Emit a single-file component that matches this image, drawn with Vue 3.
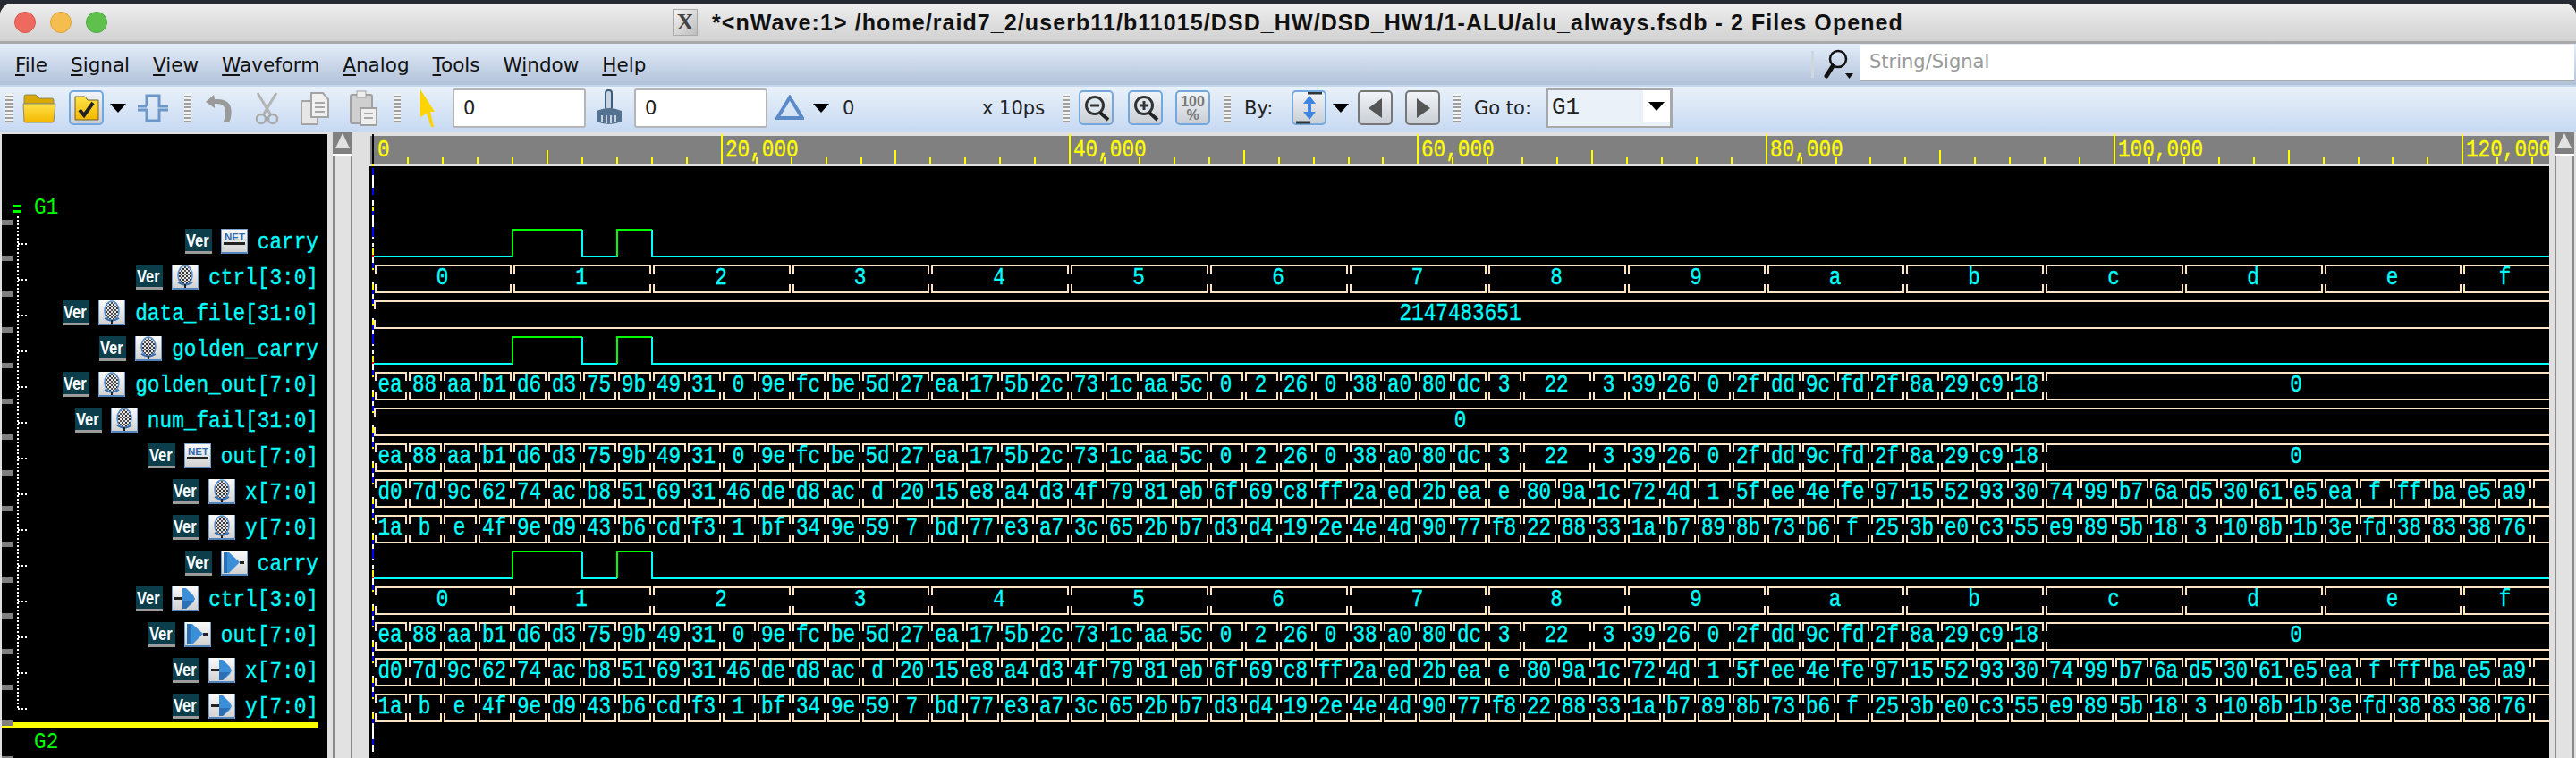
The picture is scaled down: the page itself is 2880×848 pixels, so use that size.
<template>
  <div class="screen">
    <div class="window">
      <header class="titlebar">
        <div class="lights">
          <span class="light red"></span>
          <span class="light amber"></span>
          <span class="light green"></span>
        </div>
        <span class="x-badge">X</span>
        <span class="title">*&lt;nWave:1&gt; /home/raid7_2/userb11/b11015/DSD_HW/DSD_HW1/1-ALU/alu_always.fsdb - 2 Files Opened</span>
      </header>

      <nav class="menubar">
        <span v-for="m in menus" :key="m.label" class="menu-item">{{ m.before }}<u>{{ m.key }}</u>{{ m.after }}</span>
        <span class="menu-sep"></span>
        <svg class="search-icon" width="34" height="36" viewBox="0 0 34 36">
          <circle cx="16" cy="12" r="9" fill="none" stroke="#111" stroke-width="2.5" />
          <path d="M10 20 L3 31" stroke="#111" stroke-width="5" stroke-linecap="round" />
          <path d="M24 28 h9 l-4.5 6 z" fill="#111" />
        </svg>
        <div class="search-box">String/Signal</div>
      </nav>

      <div class="toolbar">
        <span class="grip m6"></span>
        <svg class="tb m11" width="38" height="38" viewBox="0 0 38 38">
          <path d="M2 6 q0-2 2-2 h11 l4 4 h14 q2 0 2 2 v4 H2 z" fill="#d9a900" stroke="#8d8a6a" />
          <path d="M1 14 H37 L35 34 q0 1-2 1 H4 q-2 0-2-1 z" fill="url(#folderFill)" stroke="#8d8a6a" />
        </svg>
        <span class="tb-btn m14 active">
          <svg width="30" height="30" viewBox="0 0 30 30">
            <path d="M2 2 h11 l3 4 h12 v22 H2 z" fill="url(#folderFill)" stroke="#6d6130" />
            <path d="M7 17 l5 6 l10-14" fill="none" stroke="#222" stroke-width="4" />
          </svg>
        </span>
        <span class="drop m7"></span>
        <svg class="tb m12" width="36" height="34" viewBox="0 0 36 34">
          <path d="M11 15 H1 M11 15 V3 H25 V15 H35 M1 19 H11 V31 H25 V19 H35" fill="none" stroke="#6d97c9" stroke-width="3" />
        </svg>
        <span class="grip m17"></span>
        <svg class="tb m14" width="32" height="36" viewBox="0 0 32 36">
          <path d="M11 3 L2 11 L12 18 V13 Q24 12 24 22 Q24 28 22 33 L28 34 Q32 26 30 17 Q27 7 12 8 z" fill="#9a9a9a" />
        </svg>
        <svg class="tb m25" width="27" height="38" viewBox="0 0 27 38">
          <path d="M3 2 L18 27 M24 2 L9 27" stroke="#b4b4b4" stroke-width="3" fill="none" />
          <circle cx="7" cy="31" r="5" fill="none" stroke="#aaa" stroke-width="2.5" />
          <circle cx="20" cy="31" r="5" fill="none" stroke="#aaa" stroke-width="2.5" />
        </svg>
        <svg class="tb m24" width="32" height="38" viewBox="0 0 32 38">
          <rect x="1" y="11" width="18" height="26" fill="#e6e6e6" stroke="#a4a4a4" stroke-width="2" />
          <path d="M12 2 h13 l6 7 v20 H12 z" fill="#f0f0f0" stroke="#a4a4a4" stroke-width="2" />
          <path d="M16 13 h11 M16 18 h11 M16 23 h11" stroke="#a8a8a8" stroke-width="2" />
        </svg>
        <svg class="tb m22" width="32" height="40" viewBox="0 0 32 40">
          <rect x="2" y="5" width="24" height="32" rx="2" fill="#cfcfcf" stroke="#a0a0a0" stroke-width="2" />
          <rect x="9" y="1" width="10" height="7" fill="#eee" stroke="#a0a0a0" />
          <rect x="13" y="20" width="18" height="19" fill="#efefef" stroke="#a0a0a0" stroke-width="2" />
          <path d="M17 26 h10 M17 31 h10" stroke="#a8a8a8" stroke-width="2" />
        </svg>
        <span class="grip m18"></span>
        <svg class="tb m21" width="18" height="44" viewBox="0 0 18 44">
          <path d="M1 1 L17 26 L12 26 L16 43 L13 43 L8 28 L1 32 z" fill="#fdd300" />
        </svg>
        <div class="num-box m19">0</div>
        <svg class="tb m10" width="32" height="42" viewBox="0 0 32 42">
          <rect x="12" y="1" width="7" height="22" rx="3" fill="#c9d4e2" stroke="#3c5c7a" stroke-width="2" />
          <path d="M2 24 q14-6 28 0 v12 q-14 6-28 0 z" fill="#54728f" />
          <path d="M8 29 v8 M13 29 v9 M18 29 v9 M23 29 v8" stroke="#c5d2df" stroke-width="2" />
        </svg>
        <div class="num-box m12">0</div>
        <svg class="tb m9" width="32" height="30" viewBox="0 0 32 30">
          <path d="M16 3 L30 26 H2 z" fill="none" stroke="#5a8bc8" stroke-width="4" />
        </svg>
        <span class="drop m10"></span>
        <span class="tb-text zero">0</span>
        <span class="tb-text unit">x 10ps</span>
        <span class="grip m18"></span>
        <span class="tb-btn m10 active">
          <svg width="30" height="30" viewBox="0 0 30 30">
            <circle cx="13" cy="12" r="9.5" fill="#dde6ee" stroke="#333" stroke-width="3" />
            <path d="M19 20 L28 28" stroke="#222" stroke-width="4" />
            <path d="M8 12 h10" stroke="#333" stroke-width="3" />
          </svg>
        </span>
        <span class="tb-btn m16 active">
          <svg width="30" height="30" viewBox="0 0 30 30">
            <circle cx="13" cy="12" r="9.5" fill="#dde6ee" stroke="#333" stroke-width="3" />
            <path d="M19 20 L28 28" stroke="#222" stroke-width="4" />
            <path d="M8 12 h10 M13 7 v10" stroke="#333" stroke-width="3" />
          </svg>
        </span>
        <span class="tb-btn m14 active pct"><b>100</b><b>%</b></span>
        <span class="grip m15"></span>
        <span class="tb-text by">By:</span>
        <span class="tb-btn m19 active">
          <svg width="32" height="36" viewBox="0 0 32 36">
            <path d="M14 1 H30 M1 34 H17" stroke="#333" stroke-width="3" />
            <path d="M16 6 V28" stroke="#3f84e0" stroke-width="4" />
            <path d="M16 4 L23 13 H9 z M16 31 L23 22 H9 z" fill="#3f84e0" />
          </svg>
        </span>
        <span class="drop m7"></span>
        <span class="tb-btn m10 grey">
          <svg width="18" height="24" viewBox="0 0 18 24"><path d="M16 1 V23 L1 12 z" fill="#555" /></svg>
        </span>
        <span class="tb-btn m14 grey">
          <svg width="18" height="24" viewBox="0 0 18 24"><path d="M2 1 V23 L17 12 z" fill="#555" /></svg>
        </span>
        <span class="grip m15"></span>
        <span class="tb-text goto">Go to:</span>
        <div class="combo">
          <span class="combo-val">G1</span>
          <span class="combo-arrow"><span class="drop"></span></span>
        </div>
      </div>

      <main class="content">
        <aside class="names">
          <span class="marks"></span>
          <span class="tree"></span>
          <div class="group-label g1"><span class="bullet"></span><span class="glabel">G1</span></div>
          <div class="rows">
            <div v-for="(s, i) in signals" :key="i" class="row">
              <span class="stub"></span>
              <svg class="icon" width="30" height="28" viewBox="0 0 30 28">
                <rect width="30" height="28" fill="#0b3d4b" />
                <rect y="25" width="30" height="3" fill="#9c9c9c" />
                <text class="ver" transform="translate(1 20) scale(1 1.25)">Ver</text>
              </svg>
              <svg class="icon kind" width="30" height="28" viewBox="0 0 30 28">
                <defs>
                  <linearGradient id="tileFill" x1="0" y1="0" x2="0" y2="1">
                    <stop offset="0" stop-color="#fbfbfb" />
                    <stop offset="1" stop-color="#cfcfcf" />
                  </linearGradient>
                  <pattern id="hatch" width="4" height="4" patternUnits="userSpaceOnUse">
                    <rect width="4" height="4" fill="#e4e4e4" />
                    <rect width="2" height="2" fill="#333" />
                    <rect x="2" y="2" width="2" height="2" fill="#555" />
                  </pattern>
                </defs>
                <rect width="30" height="28" fill="url(#tileFill)" />
                <template v-if="s.kind === 'net'">
                  <rect width="30" height="1" fill="#7fa4cf" />
                  <text x="4" y="13" class="net">NET</text>
                  <rect x="3" y="15" width="24" height="3" fill="#222" />
                </template>
                <template v-else-if="s.kind === 'reg'">
                  <ellipse cx="15" cy="12" rx="8" ry="11" fill="url(#hatch)" stroke="#5b8fc9" stroke-width="1.5" />
                  <path d="M7 20 q8 5 16 0" fill="none" stroke="#3a6fb0" stroke-width="2" />
                  <path d="M15 22 v4" stroke="#222" stroke-width="2" />
                </template>
                <template v-else-if="s.kind === 'out'">
                  <path d="M3 2 H9 L21 13 L9 25 H3 z" fill="#3a8fd8" />
                  <path d="M3 2 H7 V25 H3 z" fill="#2b6fb5" />
                  <rect x="21" y="12" width="5" height="3" fill="#222" />
                </template>
                <template v-else>
                  <path d="M12 2 H16 L24 10 L26 14 L24 18 L16 25 H12 z" fill="#3a8fd8" />
                  <path d="M12 16 H24 L16 25 H12 z" fill="#2b6fb5" />
                  <rect x="3" y="12" width="9" height="3" fill="#222" />
                </template>
                <rect y="26" width="30" height="2" fill="#4f84bd" />
                <rect width="1" height="28" fill="#6f9dd0" />
                <rect x="29" width="1" height="28" fill="#6f9dd0" />
              </svg>
              <span class="sig-name">{{ s.name }}</span>
            </div>
          </div>
          <div class="divider"></div>
          <div class="group-label g2"><span class="glabel">G2</span></div>
        </aside>

        <div class="vscroll">
          <div class="vscroll-track">
            <div class="vscroll-btn"><svg width="18" height="20" viewBox="0 0 18 20"><path d="M9 1 L17 18 H1 z" fill="#e2e2e2" /></svg></div>
          </div>
        </div>

        <svg class="wave" width="2438" height="700" viewBox="412 148 2438 700" shape-rendering="crispEdges">
          <defs>
            <linearGradient id="folderFill" x1="0" y1="0" x2="0" y2="1">
              <stop offset="0" stop-color="#ffe24a" />
              <stop offset="1" stop-color="#f4b700" />
            </linearGradient>
          </defs>
          <rect x="412" y="186" width="2438" height="662" fill="#000" />
          <rect x="414" y="152" width="2436" height="32" fill="#808080" />
          <rect x="416" y="150" width="2" height="34" fill="#000" />

          <rect v-for="t in ticks" :key="t.x" :x="t.x" :y="t.y" width="2" :height="184 - t.y" fill="#ff0" />
          <text v-for="l in rulerLabels" :key="l.text" class="mono ruler-text" :transform="`translate(${l.x} 175) scale(.84 1)`">{{ l.text }}</text>

          <rect v-for="(c, i) in cursorBits" :key="i" x="416" :y="c.y" width="2" :height="c.h" :fill="c.color" />

          <g v-for="r in waveRows" :key="r.index">
            <template v-if="r.bit">
              <path v-for="(p, j) in r.paths" :key="j" :d="p.d" :stroke="p.color" stroke-width="2" fill="none" />
            </template>
            <template v-else>
              <path :d="r.outline" stroke="#ffe4c4" stroke-width="2" fill="none" />
              <text
                v-for="c in r.cells"
                :key="c.x"
                class="mono value"
                :transform="`translate(${c.cx} ${r.base}) scale(.84 1)`"
              >{{ c.text }}</text>
            </template>
          </g>
        </svg>

        <div class="vscroll right">
          <div class="vscroll-track">
            <div class="vscroll-btn"><svg width="18" height="20" viewBox="0 0 18 20"><path d="M9 1 L17 18 H1 z" fill="#e2e2e2" /></svg></div>
          </div>
        </div>
      </main>
    </div>
  </div>
</template>

<script setup>
import { computed } from 'vue'

const menus = [
  { label: 'File', before: '', key: 'F', after: 'ile' },
  { label: 'Signal', before: '', key: 'S', after: 'ignal' },
  { label: 'View', before: '', key: 'V', after: 'iew' },
  { label: 'Waveform', before: '', key: 'W', after: 'aveform' },
  { label: 'Analog', before: '', key: 'A', after: 'nalog' },
  { label: 'Tools', before: '', key: 'T', after: 'ools' },
  { label: 'Window', before: 'W', key: 'i', after: 'ndow' },
  { label: 'Help', before: '', key: 'H', after: 'elp' }
]

const signals = [
  { name: 'carry', kind: 'net' },
  { name: 'ctrl[3:0]', kind: 'reg' },
  { name: 'data_file[31:0]', kind: 'reg' },
  { name: 'golden_carry', kind: 'reg' },
  { name: 'golden_out[7:0]', kind: 'reg' },
  { name: 'num_fail[31:0]', kind: 'reg' },
  { name: 'out[7:0]', kind: 'net' },
  { name: 'x[7:0]', kind: 'reg' },
  { name: 'y[7:0]', kind: 'reg' },
  { name: 'carry', kind: 'out' },
  { name: 'ctrl[3:0]', kind: 'in' },
  { name: 'out[7:0]', kind: 'out' },
  { name: 'x[7:0]', kind: 'in' },
  { name: 'y[7:0]', kind: 'in' }
]

// pixel position of a simulation time
const X0 = 417.5
const PX_PER_UNIT = 389.3 / 20000
const END = 2850
const px = (t) => Math.round(X0 + t * PX_PER_UNIT)

const ctrlVals = '0 1 2 3 4 5 6 7 8 9 a b c d e f'
const outVals = 'ea 88 aa b1 d6 d3 75 9b 49 31 0 9e fc be 5d 27 ea 17 5b 2c 73 1c aa 5c 0 2 26 0 38 a0 80 dc 3 22 22 3 39 26 0 2f dd 9c fd 2f 8a 29 c9 18 0'
const xVals = 'd0 7d 9c 62 74 ac b8 51 69 31 46 de d8 ac d 20 15 e8 a4 d3 4f 79 81 eb 6f 69 c8 ff 2a ed 2b ea e 80 9a 1c 72 4d 1 5f ee 4e fe 97 15 52 93 30 74 99 b7 6a d5 30 61 e5 ea f ff ba e5 a9 -'
const yVals = '1a b e 4f 9e d9 43 b6 cd f3 1 bf 34 9e 59 7 bd 77 e3 a7 3c 65 2b b7 d3 d4 19 2e 4e 4d 90 77 f8 22 88 33 1a b7 89 8b 73 b6 f 25 3b e0 c3 55 e9 89 5b 18 3 10 8b 1b 3e fd 38 83 38 76 -'

const rowDefs = [
  { bit: true },
  { vals: ctrlVals, step: 8000 },
  { vals: '2147483651', step: 0 },
  { bit: true },
  { vals: outVals, step: 2000 },
  { vals: '0', step: 0 },
  { vals: outVals, step: 2000 },
  { vals: xVals, step: 2000 },
  { vals: yVals, step: 2000 },
  { bit: true },
  { vals: ctrlVals, step: 8000 },
  { vals: outVals, step: 2000 },
  { vals: xVals, step: 2000 },
  { vals: yVals, step: 2000 }
]

// merge equal neighbours, last value runs to the right edge
const buildCells = (vals, step) => {
  const list = vals.split(' ')
  if (!step) return [{ text: list[0], from: 417, to: END, open: true }]
  const cells = []
  list.forEach((v, i) => {
    const last = cells[cells.length - 1]
    if (last && last.text === v) {
      last.to = px((i + 1) * step)
    } else {
      cells.push({ text: v === '-' ? '' : v, from: px(i * step), to: px((i + 1) * step) })
    }
  })
  cells[cells.length - 1].to = END
  cells[cells.length - 1].open = true
  return cells
}

const waveRows = computed(() =>
  rowDefs.map((def, index) => {
    const top = 257 + index * 40
    const bot = top + 30
    if (def.bit) {
      const [a, b, c, d] = [8000, 12000, 14000, 16000].map(px)
      return {
        index,
        bit: true,
        paths: [
          { d: `M418 ${bot} H${a}`, color: '#0ff' },
          { d: `M${a} ${bot} V${top} H${b}`, color: '#0f0' },
          { d: `M${b} ${top} V${bot} H${c}`, color: '#0ff' },
          { d: `M${c} ${bot} V${top} H${d}`, color: '#0f0' },
          { d: `M${d} ${top} V${bot} H${END}`, color: '#0ff' }
        ]
      }
    }
    const cells = buildCells(def.vals, def.step)
    let outline = ''
    for (const c of cells) {
      const l = c.from + 2
      const r = c.open ? END : c.to - 2
      const rightTop = c.open ? '' : ` V${top + 9}`
      const rightBot = c.open ? '' : ` V${bot - 9}`
      outline += `M${l} ${top + 9} V${top} H${r}${rightTop} `
      outline += `M${l} ${bot - 9} V${bot} H${r}${rightBot} `
    }
    return {
      index,
      bit: false,
      outline,
      base: top + 21,
      cells: cells
        .filter((c) => c.text)
        .map((c) => ({ x: c.from, text: c.text, cx: (c.from + c.to) / 2 - 1 }))
    }
  })
)

const ticks = computed(() => {
  const out = []
  for (let t = 2000; t < 130000; t += 2000) {
    const y = t % 20000 === 0 ? 150 : t % 10000 === 0 ? 168 : 176
    out.push({ x: px(t) - 1, y })
  }
  return out
})

const rulerLabels = [0, 20, 40, 60, 80, 100, 120].map((k) => ({
  text: k === 0 ? '0' : `${k},000`,
  x: px(k * 1000) + 4
}))

// the coloured marker column at time zero
const cursorBits = computed(() => {
  const bits = [
    { y: 184, h: 2, color: '#ff0' },
    { y: 188, h: 8, color: '#00f' },
    { y: 196, h: 14, color: '#fff' },
    { y: 210, h: 8, color: '#00f' },
    { y: 224, h: 6, color: '#fff' },
    { y: 232, h: 4, color: '#ff0' },
    { y: 236, h: 4, color: '#00f' },
    { y: 240, h: 14, color: '#fff' }
  ]
  rowDefs.forEach((def, i) => {
    const y = 254 + i * 40
    if (def.bit) {
      bits.push({ y, h: 11, color: '#00f' }, { y: y + 11, h: 2, color: '#fff' }, { y: y + 18, h: 4, color: '#fff' })
      bits.push({ y: y + 24, h: 7, color: '#ff0' }, { y: y + 31, h: 2, color: '#f00' }, { y: y + 33, h: 7, color: '#fff' })
    } else {
      bits.push({ y, h: 6, color: '#00f' }, { y: y + 6, h: 2, color: '#ff0' })
      bits.push({ y: y + 22, h: 2, color: '#fff' }, { y: y + 24, h: 6, color: '#ff0' }, { y: y + 30, h: 5, color: '#00f' }, { y: y + 35, h: 5, color: '#fff' })
    }
  })
  bits.push({ y: 814, h: 13, color: '#fff' }, { y: 827, h: 6, color: '#00f' }, { y: 833, h: 8, color: '#fff' })
  return bits
})
</script>

<style scoped>
.screen {
  width: 2880px;
  height: 848px;
  background: #262b33;
  overflow: hidden;
  padding-top: 4px;
  box-sizing: border-box;
}

.window {
  height: 844px;
  display: flex;
  flex-direction: column;
  border-radius: 14px 14px 0 0;
  overflow: hidden;
  background: #dedede;
}

.titlebar {
  position: relative;
  flex: none;
  height: 42px;
  border-bottom: 3px solid #aaa;
  background: linear-gradient(#eeeeee, #d1d1d1);
  display: flex;
  align-items: center;
  box-sizing: content-box;
}

.lights {
  display: flex;
  gap: 16px;
  margin-left: 16px;
}

.light {
  width: 24px;
  height: 24px;
  border-radius: 50%;
  box-sizing: border-box;
}

.red { background: #ee6a5e; border: 1px solid #d8564b; }
.amber { background: #f5bd4f; border: 1px solid #dca23a; }
.green { background: #5fc04e; border: 1px solid #4caa3e; }

.x-badge {
  margin-left: 632px;
  width: 28px;
  height: 30px;
  background: linear-gradient(135deg, #f4f4f4, #bdbdbd);
  border: 1px solid #aaa;
  box-sizing: border-box;
  color: #444;
  font: bold 26px/28px "Liberation Serif", serif;
  text-align: center;
}

.title {
  margin-left: 16px;
  font: bold 25px "Liberation Sans", sans-serif;
  letter-spacing: 1.08px;
  color: #111;
  white-space: nowrap;
}

.menubar {
  flex: none;
  height: 46px;
  background: linear-gradient(#e4eefb, #b1c1d8);
  display: flex;
  align-items: center;
  padding-left: 17px;
  gap: 26px;
  font: 21.5px "DejaVu Sans", sans-serif;
  color: #111;
}

.menu-item {
  white-space: nowrap;
}

.menu-item u {
  text-decoration-thickness: 2px;
  text-underline-offset: 3px;
}

.menu-sep {
  width: 3px;
  height: 30px;
  background: #cfd6df;
  margin-left: auto;
  margin-right: -15px;
}

.search-icon {
  flex: none;
  margin-right: -19px;
}

.search-box {
  width: 798px;
  height: 41px;
  align-self: flex-start;
  margin: 1px 2px 0 0;
  padding-left: 10px;
  background: #fff;
  border-bottom: 2px solid #aaa;
  box-sizing: border-box;
  color: #999;
  line-height: 39px;
  font-size: 21px;
}

.toolbar {
  flex: none;
  height: 53px;
  padding-bottom: 4px;
  background: linear-gradient(#e9f1f9, #c6d9f3);
  border-top: 2px solid #c4d5ee;
  box-sizing: border-box;
  display: flex;
  align-items: center;
  font: 21px "DejaVu Sans", sans-serif;
  color: #222;
}

.toolbar > * {
  flex: none;
}

.m6 { margin-left: 6px; }
.m7 { margin-left: 7px; }
.m9 { margin-left: 9px; }
.m10 { margin-left: 10px; }
.m11 { margin-left: 11px; }
.m12 { margin-left: 12px; }
.m14 { margin-left: 14px; }
.m15 { margin-left: 15px; }
.m16 { margin-left: 16px; }
.m17 { margin-left: 17px; }
.m18 { margin-left: 18px; }
.m19 { margin-left: 19px; }
.m21 { margin-left: 21px; }
.m22 { margin-left: 22px; }
.m24 { margin-left: 24px; }
.m25 { margin-left: 25px; }

.grip {
  width: 8px;
  height: 32px;
  background: repeating-linear-gradient(#f3f3f3 0 2px, #9f9f9f 2px 4px);
}

.drop {
  display: block;
  width: 0;
  height: 0;
  border-left: 9px solid transparent;
  border-right: 9px solid transparent;
  border-top: 10px solid #000;
}

.tb-btn {
  width: 39px;
  height: 39px;
  border: 2px solid #74a8dc;
  border-radius: 5px;
  box-sizing: border-box;
  background: linear-gradient(#f1f4f8, #c9cfd6);
  display: flex;
  align-items: center;
  justify-content: center;
}

.tb-btn.grey {
  border-color: #777;
}

.pct {
  flex-direction: column;
  font: bold 16px/15px "Liberation Sans", sans-serif;
  color: #777;
}

.num-box {
  width: 149px;
  height: 44px;
  background: #fff;
  border: 2px solid #b5b5b5;
  border-radius: 3px;
  box-sizing: border-box;
  line-height: 40px;
  padding-left: 10px;
}

.tb-text {
  white-space: nowrap;
}

.zero { margin-left: 15px; width: 13px; }
.unit { margin-left: 143px; width: 72px; }
.by { margin-left: 15px; width: 34px; }
.goto { margin-left: 15px; width: 66px; }

.combo {
  margin-left: 15px;
  width: 141px;
  height: 44px;
  border: 2px solid #a8a8a8;
  border-right-width: 3px;
  box-sizing: border-box;
  background: #eaf1f9;
  display: flex;
}

.combo-val {
  flex: 1;
  padding-left: 4px;
  font: 26px/38px "Liberation Mono", monospace;
}

.combo-arrow {
  width: 30px;
  height: 36px;
  background: #fff;
  display: flex;
  align-items: center;
  justify-content: center;
}

.content {
  flex: 1;
  min-height: 0;
  display: flex;
  background: #e0e0e0;
}

.names {
  position: relative;
  flex: none;
  width: 364px;
  height: 698px;
  margin: 2px 0 0 2px;
  background: #000;
  overflow: hidden;
}

.marks {
  position: absolute;
  left: 0;
  top: 96px;
  bottom: 0;
  width: 12px;
  background: repeating-linear-gradient(#808080 0 6px, transparent 6px 40px);
}

.tree {
  position: absolute;
  left: 17px;
  top: 92px;
  width: 2px;
  height: 550px;
  background: repeating-linear-gradient(#fff 0 2px, transparent 2px 4px);
}

.group-label {
  display: flex;
  color: #0f0;
  font: 22.75px/1 "Liberation Mono", monospace;
  box-sizing: border-box;
  align-items: flex-end;
}

.g1 {
  height: 106px;
  padding-bottom: 10px;
}

.bullet {
  width: 10px;
  height: 9px;
  margin: 0 14px -1px 12px;
  border-top: 3px solid #0f0;
  border-bottom: 3px solid #0f0;
  box-sizing: border-box;
  position: relative;
  top: -9px;
}

.glabel {
  display: inline-block;
  transform: scaleY(1.143);
  transform-origin: bottom;
}

.g2 {
  height: 34px;
  padding: 0 0 4px 36px;
}

.rows {
  display: grid;
  grid-auto-rows: 40px;
  height: 552px;
}

.row {
  position: relative;
  display: flex;
  justify-content: flex-end;
  align-items: flex-start;
  padding-right: 10px;
  color: #0ff;
  font: 22.75px/1 "Liberation Mono", monospace;
}

.stub {
  position: absolute;
  left: 18px;
  top: 16px;
  width: 12px;
  height: 2px;
  background: repeating-linear-gradient(90deg, #fff 0 2px, transparent 2px 4px);
}

.icon {
  flex: none;
  margin-right: 10px;
}

.icon.kind {
  margin-right: 11px;
}

.ver {
  fill: #fff;
  font: bold 16.5px "Liberation Sans", sans-serif;
}

.net {
  fill: #2f6cae;
  font: bold 11.5px "Liberation Sans", sans-serif;
}

.sig-name {
  flex: none;
  white-space: nowrap;
  margin-top: 6px;
  transform: scaleY(1.143);
  transform-origin: bottom;
  -webkit-text-stroke: .3px #0ff;
}

.divider {
  height: 6px;
  width: 354px;
  background: #ff0;
}

.vscroll {
  flex: none;
  width: 46px;
  padding-left: 6px;
  box-sizing: border-box;
}

.vscroll-track {
  width: 22px;
  height: 100%;
  border-left: 2px solid #8a8a8a;
  border-right: 2px solid #8a8a8a;
  box-sizing: border-box;
  background: #e2e2e2;
}

.vscroll-btn {
  height: 24px;
  margin: 0 -2px;
  background: #808080;
  border-bottom: 2px solid #fff;
  display: flex;
  justify-content: center;
  align-items: flex-start;
}

.vscroll.right {
  width: 30px;
}

.wave {
  flex: none;
  display: block;
}

.mono {
  font-family: "Liberation Mono", monospace;
  font-size: 27px;
  stroke-width: .35px;
}

.ruler-text {
  fill: #ff0;
  stroke: #ff0;
}

.value {
  fill: #0ff;
  stroke: #0ff;
  text-anchor: middle;
}
</style>
